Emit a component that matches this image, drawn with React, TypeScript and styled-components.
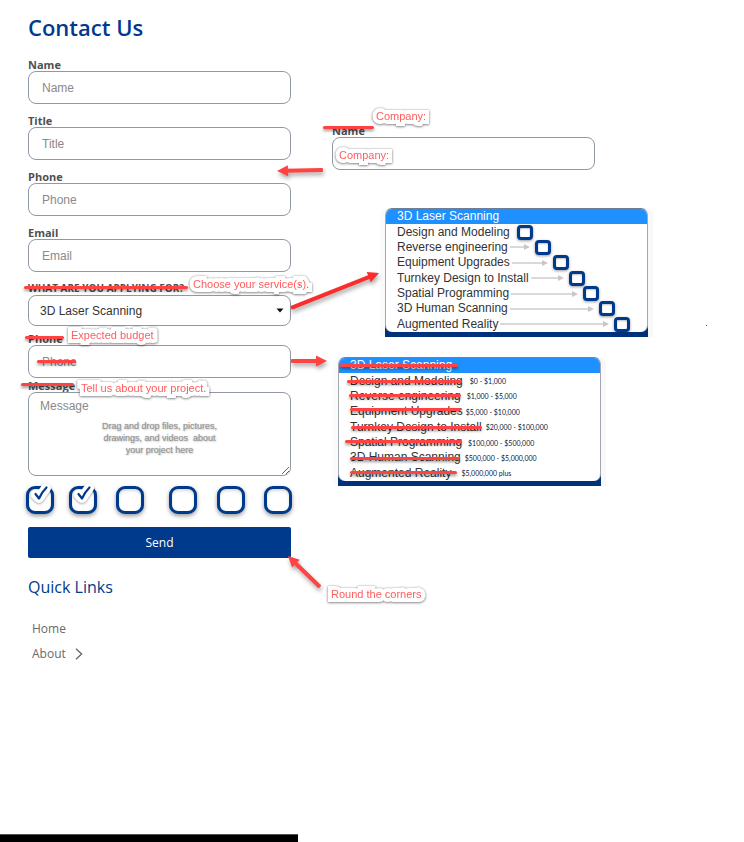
import React from "react";
import styled, { createGlobalStyle } from "styled-components";

const NAVY = "#003a8c";
const RED = "#ff4343";
const LINE = "#9298a3";
const ARIAL = `"Liberation Sans", Arial, sans-serif`;
const OPEN = `"Open Sans", "Noto Sans", sans-serif`;

const GlobalStyle = createGlobalStyle`
  *, *::before, *::after { box-sizing: border-box; }
  body { margin: 0; background: #fff; color: #444; font-family: ${OPEN}; }
`;

const Page = styled.div`
  min-height: 100vh;
  display: flex;
  flex-direction: column;
  overflow-x: hidden;
`;

const Columns = styled.main`
  display: grid;
  grid-template-columns: 263fr 453fr;
  padding: 12px 0 40px 28px;
`;

const FormColumn = styled.div`
  min-width: 0;
`;

const NotesColumn = styled.div`
  min-width: 0;
  display: flex;
  flex-direction: column;
  padding-top: 112px;
`;

const Title = styled.h1`
  margin: 0 0 16px;
  font: 600 22px/30px ${OPEN};
  color: ${NAVY};
`;

const Form = styled.form`
  display: flex;
  flex-direction: column;
`;

const Field = styled.div<{ $gap?: number }>`
  position: relative;
  display: flex;
  flex-direction: column;
  align-items: flex-start;
  margin-bottom: ${(p) => p.$gap ?? 10}px;
`;

const Label = styled.label<{ $small?: boolean }>`
  position: relative;
  font: 700 ${(p) => (p.$small ? 10 : 11)}px/13px ${OPEN};
  color: #505050;
  white-space: nowrap;
`;

const Control = styled.div`
  position: relative;
  width: 100%;
  display: flex;
`;

const Input = styled.input`
  width: 100%;
  height: 33px;
  padding: 0 13px;
  border: 1px solid ${LINE};
  border-radius: 8px;
  background: #fff;
  color: #333;
  font: 12px/16px ${ARIAL};
  &::placeholder { color: #8a8a8a; opacity: 1; }
`;

const Select = styled.select`
  width: 100%;
  height: 31px;
  padding: 0 24px 0 11px;
  border: 1px solid ${LINE};
  border-radius: 8px;
  appearance: none;
  background: #fff;
  color: #333;
  font: 12px/16px ${ARIAL};
`;

const Caret = styled.svg`
  position: absolute;
  right: 7px;
  top: 13px;
  width: 8px;
  height: 5px;
  pointer-events: none;
`;

const TextArea = styled.textarea`
  width: 100%;
  height: 84px;
  padding: 5px 11px;
  border: 1px solid ${LINE};
  border-radius: 8px;
  background: #fff;
  color: #333;
  font: 12px/16px ${ARIAL};
  &::placeholder { color: #8a8a8a; opacity: 1; }
`;

const DropHint = styled.p`
  position: absolute;
  inset: 28px 0 auto 0;
  margin: 0;
  text-align: center;
  white-space: pre;
  font: 400 9px/12px ${ARIAL};
  color: #999;
  text-shadow: 0 0 1px #aaa, 1px 1px 2px #ccc;
  pointer-events: none;
`;

const Strike = styled.span<{ $left: number; $right: number; $top: number }>`
  position: absolute;
  left: ${(p) => p.$left}px;
  right: ${(p) => p.$right}px;
  top: ${(p) => p.$top}px;
  height: 3px;
  border-radius: 2px;
  background: ${RED};
  box-shadow: 0 2px 3px rgba(0, 0, 0, 0.4);
  pointer-events: none;
`;

const PlaceholderStrike = styled(Strike)`
  right: auto;
  width: 39px;
`;

const Callout = styled.span<{ $left: number; $top: number }>`
  position: absolute;
  z-index: 2;
  left: ${(p) => p.$left}px;
  top: ${(p) => p.$top}px;
  white-space: nowrap;
  font: 400 11px/14px ${ARIAL};
  color: #ff5c5c;
  -webkit-text-stroke: 8px #fff;
  stroke-linejoin: round;
  paint-order: stroke fill;
  filter: drop-shadow(0 0 1px rgba(0, 0, 0, 0.3)) drop-shadow(0 1px 1px rgba(0, 0, 0, 0.35));
  pointer-events: none;
`;

const ArrowSvg = styled.svg<{ $top: number; $shift: number }>`
  position: absolute;
  z-index: 3;
  left: calc(100% + ${(p) => p.$shift}px);
  top: ${(p) => p.$top}px;
  overflow: visible;
  filter: drop-shadow(1px 3px 2px rgba(0, 0, 0, 0.35));
  pointer-events: none;
`;

const Checks = styled.div`
  display: grid;
  grid-template-columns: 43fr 47fr 52fr 48fr 47fr 28fr;
  margin: 0 -1px 13px -2px;
`;

const CheckCell = styled.label`
  position: relative;
  display: block;
  width: 28px;
  height: 28px;
`;

const CheckBox = styled.input`
  appearance: none;
  display: block;
  width: 28px;
  height: 28px;
  margin: 0;
  border: 3px solid ${NAVY};
  border-radius: 9px;
  background: #fff;
  box-shadow: 0 2px 4px rgba(0, 0, 0, 0.4), inset 0 2px 3px rgba(0, 0, 0, 0.15);
  & + svg { display: none; }
  &:checked + svg { display: block; }
`;

const Tick = styled.svg`
  position: absolute;
  left: 2px;
  top: -5px;
  width: 28px;
  height: 26px;
  overflow: visible;
  filter: drop-shadow(0 1px 1px rgba(0, 0, 0, 0.35));
  pointer-events: none;
`;

const SendWrap = styled.div`
  position: relative;
  display: flex;
  margin-bottom: 18px;
`;

const SendButton = styled.button`
  width: 100%;
  height: 31px;
  padding: 0;
  border: 0;
  border-radius: 2px;
  background: ${NAVY};
  color: #fff;
  font: 500 12px/16px ${OPEN};
`;

const LinksTitle = styled.h2`
  margin: 0 0 18px;
  font: 500 16px/22px ${OPEN};
  color: ${NAVY};
`;

const Links = styled.nav`
  display: flex;
  flex-direction: column;
  align-items: flex-start;
  padding-left: 4px;
`;

const NavLink = styled.a`
  display: flex;
  align-items: center;
  gap: 9px;
  font: 400 12px/25px ${OPEN};
  color: #6a6a6a;
  text-decoration: none;
`;

const Note = styled.section<{ $indent: number; $gap: number }>`
  position: relative;
  width: calc(100% - ${(p) => p.$indent}px);
  max-width: 263px;
  margin: 0 0 ${(p) => p.$gap}px ${(p) => p.$indent}px;
`;

const Panel = styled(Note)`
  padding-bottom: 5px;
  border-radius: 7px 7px 0 0;
  background: linear-gradient(#00327c, #00327c) bottom / 100% 14px no-repeat;
  box-shadow: -6px 0 0 -1px #fafafa, 5px 0 0 #f8f8f8;
`;

const Options = styled.ul`
  display: grid;
  grid-auto-rows: 1fr;
  min-height: 124px;
  margin: 0;
  padding: 0;
  list-style: none;
  border: 1px solid #a3a8b0;
  border-top-color: #6f7f95;
  border-bottom: 0;
  border-radius: 7px;
  background: #fff;
  overflow: hidden;
`;

const Option = styled.li<{ $active?: boolean }>`
  display: flex;
  align-items: center;
  padding-left: 11px;
  background: ${(p) => (p.$active ? "#1e90ff" : "transparent")};
  color: ${(p) => (p.$active ? "#fff" : "#333")};
  font: 12px/15px ${ARIAL};
  white-space: nowrap;
`;

const ServiceChoice = styled.label<{ $width: number }>`
  display: flex;
  align-items: center;
  justify-content: space-between;
  width: ${(p) => p.$width}px;
  height: 15px;
`;

const Connector = styled.span`
  flex: 1;
  display: flex;
  align-items: center;
  margin: 0 5px 0 2px;
  &::before { content: ""; flex: 1; height: 2px; background: #dcd7d9; }
  &::after {
    content: "";
    border: 3px solid transparent;
    border-left: 6px solid #cbc5c7;
    border-right: 0;
  }
`;

const MiniBox = styled.input`
  appearance: none;
  flex: none;
  width: 16px;
  height: 15px;
  margin: 0;
  border: 3px solid ${NAVY};
  border-radius: 4px;
  background: #fff;
  box-shadow: 0 1px 3px rgba(0, 0, 0, 0.4), inset 0 1px 2px rgba(0, 0, 0, 0.25);
`;

const Struck = styled.span`
  position: relative;
`;

const Amount = styled.span<{ $gap: number }>`
  margin-left: ${(p) => p.$gap}px;
  font: 400 7px/12px Lato, ${OPEN};
  color: #0c1840;
`;

const Speck = styled.i`
  position: absolute;
  left: calc(100% + 58px);
  bottom: 11px;
  width: 1px;
  height: 1px;
  background: #56667c;
`;

const Footer = styled.footer`
  margin-top: auto;
  width: 40%;
  height: 8px;
  border-top: 1px solid #555;
  background: #000;
`;

type ArrowProps = {
  from: [number, number];
  to: [number, number];
  top: number;
  shift?: number;
  color?: string;
};

/* A straight arrow; its points are measured from the svg's own corner. */
function Arrow({ from, to, top, shift = 0, color = RED }: ArrowProps) {
  const [x1, y1] = from;
  const [x2, y2] = to;
  const len = Math.hypot(x2 - x1, y2 - y1);
  const angle = (Math.atan2(y2 - y1, x2 - x1) * 180) / Math.PI;
  return (
    <ArrowSvg $top={top} $shift={shift} width="10" height="10" aria-hidden="true">
      <g transform={`translate(${x1} ${y1}) rotate(${angle})`} fill={color}>
        <rect x="0" y="-2" width={len - 8} height="4" rx="1" />
        <path d={`M${len} 0 L${len - 11} -5.5 V5.5 Z`} />
      </g>
    </ArrowSvg>
  );
}

const services: { name: string; width: number }[] = [
  { name: "Design and Modeling", width: 136 },
  { name: "Reverse engineering", width: 154 },
  { name: "Equipment Upgrades", width: 172 },
  { name: "Turnkey Design to Install", width: 188 },
  { name: "Spatial Programming", width: 202 },
  { name: "3D Human Scanning", width: 218 },
  { name: "Augmented Reality", width: 233 },
];

const budgets = [
  { name: "Design and Modeling", amount: "$0 - $1,000", gap: 7, left: -3, right: 1, top: 6 },
  { name: "Reverse engineering", amount: "$1,000 - $5,000", gap: 6, left: -1, right: 0, top: 5 },
  { name: "Equipment Upgrades", amount: "$5,000 - $10,000", gap: 3, left: 0, right: 2, top: 4 },
  { name: "Turnkey Design to Install", amount: "$20,000 - $100,000", gap: 4, left: 1, right: 0, top: 6 },
  { name: "Spatial Programming", amount: "$100,000 - $500,000", gap: 6, left: -5, right: 0, top: 5 },
  { name: "3D Human Scanning", amount: "$500,000 - $5,000,000", gap: 4, left: 0, right: 1, top: 7 },
  { name: "Augmented Reality", amount: "$5,000,000 plus", gap: 10, left: 0, right: -6, top: 5 },
];

const checks = [true, true, false, false, false, false];

export default function App() {
  return (
    <Page>
      <GlobalStyle />
      <Columns>
        <FormColumn>
          <Title>Contact Us</Title>
          <Form onSubmit={(e) => e.preventDefault()}>
            <Field>
              <Label htmlFor="name">Name</Label>
              <Input id="name" placeholder="Name" />
            </Field>
            <Field>
              <Label htmlFor="title">Title</Label>
              <Input id="title" placeholder="Title" />
              <Arrow from={[46, 5]} to={[0, 6]} top={51} shift={-14} />
            </Field>
            <Field>
              <Label htmlFor="phone">Phone</Label>
              <Input id="phone" placeholder="Phone" />
            </Field>
            <Field>
              <Label htmlFor="email">Email</Label>
              <Input id="email" type="email" placeholder="Email" />
            </Field>
            <Field $gap={6}>
              <Label htmlFor="service" $small>
                WHAT ARE YOU APPLYING FOR?
                <Strike $left={-4} $right={-4} $top={4} />
              </Label>
              <Callout $left={165} $top={-5}>Choose your service(s).</Callout>
              <Control>
                <Select id="service" defaultValue="3D Laser Scanning">
                  <option>3D Laser Scanning</option>
                  {services.map((s) => (
                    <option key={s.name}>{s.name}</option>
                  ))}
                </Select>
                <Caret viewBox="0 0 8 5">
                  <path d="M0.5 0.5H7.5L4 4.5Z" fill="#111" />
                </Caret>
              </Control>
              <Arrow from={[0, 35]} to={[88, 0]} top={-9} color="#fb2c2c" />
            </Field>
            <Field $gap={1}>
              <Label htmlFor="budget">
                Phone
                <Strike $left={-3} $right={-1} $top={4} />
              </Label>
              <Callout $left={43} $top={-4}>Expected budget</Callout>
              <Control>
                <Input id="budget" placeholder="Phone" />
                <PlaceholderStrike $left={9} $right={0} $top={15} />
              </Control>
              <Arrow from={[0, 5]} to={[36, 5]} top={24} />
            </Field>
            <Field>
              <Label htmlFor="message">
                Message
                <Strike $left={-7} $right={1} $top={4} />
              </Label>
              <Callout $left={53} $top={2}>Tell us about your project.</Callout>
              <Control>
                <TextArea id="message" placeholder="Message" />
                <DropHint>
                  {"Drag and drop files, pictures,\ndrawings, and videos  about\nyour project here"}
                </DropHint>
              </Control>
            </Field>
            <Checks>
              {checks.map((on, i) => (
                <CheckCell key={i}>
                  <CheckBox type="checkbox" defaultChecked={on} aria-label={`Choice ${i + 1}`} />
                  <Tick viewBox="0 0 28 26" fill="none" strokeLinecap="round" strokeLinejoin="round">
                    <path d="M7.5 13.5L11 17L18 7" stroke="#fff" strokeWidth="10" />
                    <path d="M7.5 13L11 17.5Q13.5 11.5 18.5 6.5" stroke={NAVY} strokeWidth="2.2" />
                  </Tick>
                </CheckCell>
              ))}
            </Checks>
            <SendWrap>
              <SendButton type="submit">Send</SendButton>
              <Arrow from={[32, 31]} to={[0, 0]} top={29} shift={-3} />
              <Callout $left={303} $top={60}>Round the corners</Callout>
            </SendWrap>
          </Form>
          <LinksTitle>Quick Links</LinksTitle>
          <Links aria-label="Quick links">
            <NavLink href="#home">Home</NavLink>
            <NavLink href="#about">
              About
              <svg width="8" height="12" viewBox="0 0 8 12" fill="none" stroke="#6a6a6a" strokeWidth="1.4" aria-hidden="true">
                <path d="M1 0.8L6.6 6L1 11.2" />
              </svg>
            </NavLink>
          </Links>
        </FormColumn>

        <NotesColumn>
          <Note $indent={41} $gap={38}>
            <Field $gap={0}>
              <Label htmlFor="company">
                Name
                <Strike $left={-9} $right={-9} $top={2} />
              </Label>
              <Input id="company" />
            </Field>
            <Callout $left={44} $top={-15}>Company:</Callout>
            <Callout $left={7} $top={24}>Company:</Callout>
          </Note>

          <Panel $indent={94} $gap={20}>
            <Options>
              <Option $active>3D Laser Scanning</Option>
              {services.map((s, i) => (
                <Option key={s.name}>
                  <ServiceChoice $width={s.width}>
                    {s.name}
                    {i > 0 && <Connector />}
                    <MiniBox type="checkbox" />
                  </ServiceChoice>
                </Option>
              ))}
            </Options>
            <Speck />
          </Panel>

          <Panel $indent={47} $gap={0}>
            <Options>
              <Option $active>
                <Struck>
                  3D Laser Scanning
                  <Strike $left={-10} $right={-6} $top={6} />
                </Struck>
              </Option>
              {budgets.map((b) => (
                <Option key={b.name}>
                  <Struck>
                    {b.name}
                    <Strike $left={b.left} $right={b.right} $top={b.top} />
                  </Struck>
                  <Amount $gap={b.gap}>{b.amount}</Amount>
                </Option>
              ))}
            </Options>
          </Panel>
        </NotesColumn>
      </Columns>
      <Footer />
    </Page>
  );
}
